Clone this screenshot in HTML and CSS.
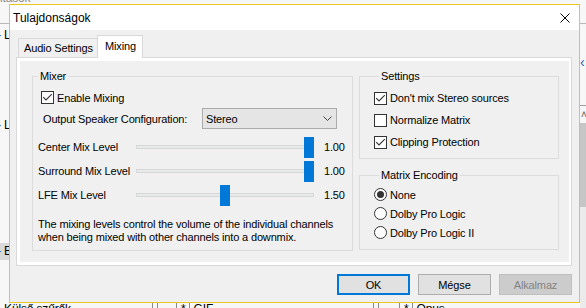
FILE: index.html
```html
<!DOCTYPE html>
<html lang="hu">
<head>
<meta charset="utf-8">
<title>Tulajdonságok</title>
<link rel="stylesheet" href="styles.css">
</head>
<body>
<div class="desktop">
  <div class="bg-title">itások</div>
  <div class="bg-line"></div>
  <div class="bg-item bg-item-1">- L</div>
  <div class="bg-item bg-item-2">- L</div>
  <div class="bg-item bg-item-3 bg-sel">- E</div>
  <div class="bg-item bg-item-4">- Külső szűrők</div>
  <div class="bg-col bg-col-a"><span class="vl"></span><span class="vl"></span><span class="gap"></span><span class="vl"></span><span class="star">*</span><span class="vl"></span><span class="cell">GIF</span></div>
  <div class="bg-col bg-col-b"><span class="vl"></span><span class="vl"></span><span class="gap gap-b"></span><span class="vl"></span><span class="star">*</span><span class="vl"></span><span class="cell">Opus</span></div>
  <div class="bg-chev">&lsaquo;</div>
  <div class="bg-rline"></div>
  <div class="bg-up">&#x2c4;</div>
  <div class="bg-thumb"></div>
  <div class="bg-track"></div>

  <div class="dialog">
    <div class="titlebar">
      <span class="title">Tulajdonságok</span>
      <svg class="close" width="10" height="10" viewBox="0 0 10 10"><path d="M0.5 0.5 L9.5 9.5 M9.5 0.5 L0.5 9.5" stroke="#000" stroke-width="1" fill="none"/></svg>
    </div>
    <div class="dialog-body">
      <div class="tabs">
        <div class="tab">Audio Settings</div>
        <div class="tab active">Mixing</div>
      </div>
      <div class="panel">
        <div class="page">
          <fieldset class="group mixer">
            <legend>Mixer</legend>
            <div class="check-row">
              <span class="cb"><svg width="11" height="11" viewBox="0 0 11 11"><polyline points="1.2,5.2 4,8 9.8,2.2" fill="none" stroke="#333" stroke-width="1.1"/></svg></span>
              <span>Enable Mixing</span>
            </div>
            <div class="speaker-row">
              <span class="speaker-label">Output Speaker Configuration:</span>
              <div class="select">
                <span>Stereo</span>
                <svg width="9" height="5" viewBox="0 0 9 5"><polyline points="0.5,0.5 4.5,4.5 8.5,0.5" fill="none" stroke="#444" stroke-width="1"/></svg>
              </div>
            </div>
            <div class="sliders">
              <div class="slider-row">
                <span class="slider-label">Center Mix Level</span>
                <div class="slider"><div class="track"></div><div class="thumb" style="left:168px"></div></div>
                <span class="slider-value">1.00</span>
              </div>
              <div class="slider-row">
                <span class="slider-label">Surround Mix Level</span>
                <div class="slider"><div class="track"></div><div class="thumb" style="left:168px"></div></div>
                <span class="slider-value">1.00</span>
              </div>
              <div class="slider-row">
                <span class="slider-label">LFE Mix Level</span>
                <div class="slider"><div class="track"></div><div class="thumb" style="left:84px"></div></div>
                <span class="slider-value">1.50</span>
              </div>
            </div>
            <p class="desc">The mixing levels control the volume of the individual channels<br>when being mixed with other channels into a downmix.</p>
          </fieldset>
          <div class="right-col">
            <fieldset class="group settings">
              <legend>Settings</legend>
              <div class="opt-row">
                <span class="cb"><svg width="11" height="11" viewBox="0 0 11 11"><polyline points="1.2,5.2 4,8 9.8,2.2" fill="none" stroke="#333" stroke-width="1.1"/></svg></span>
                <span>Don't mix Stereo sources</span>
              </div>
              <div class="opt-row">
                <span class="cb"></span>
                <span>Normalize Matrix</span>
              </div>
              <div class="opt-row">
                <span class="cb"><svg width="11" height="11" viewBox="0 0 11 11"><polyline points="1.2,5.2 4,8 9.8,2.2" fill="none" stroke="#333" stroke-width="1.1"/></svg></span>
                <span>Clipping Protection</span>
              </div>
            </fieldset>
            <fieldset class="group matrix">
              <legend>Matrix Encoding</legend>
              <div class="radio-row">
                <span class="rb on"><span class="dot"></span></span>
                <span>None</span>
              </div>
              <div class="radio-row">
                <span class="rb"></span>
                <span>Dolby Pro Logic</span>
              </div>
              <div class="radio-row">
                <span class="rb"></span>
                <span>Dolby Pro Logic II</span>
              </div>
            </fieldset>
          </div>
        </div>
      </div>
      <div class="buttons">
        <button class="btn default">OK</button>
        <button class="btn">Mégse</button>
        <button class="btn disabled">Alkalmaz</button>
      </div>
    </div>
  </div>
</div>
</body>
</html>
```
FILE: styles.css
```css
* { box-sizing: border-box; }

body {
  margin: 0;
  width: 586px;
  height: 308px;
  overflow: hidden;
  font-family: "Liberation Sans", Arial, sans-serif;
  font-size: 11px;
  letter-spacing: -0.15px;
  color: #000;
}

.desktop {
  position: relative;
  width: 586px;
  height: 308px;
  overflow: hidden;
  background: #f7f7f7;
}

/* ---- background application (behind the dialog) ---- */
.bg-title {
  position: absolute;
  left: 0;
  top: -9px;
  font-size: 12px;
  line-height: 14px;
  color: #8c8c8c;
}
.bg-line {
  position: absolute;
  left: 0;
  right: 0;
  top: 23px;
  height: 1px;
  background: #b9b9b9;
}
.bg-item {
  position: absolute;
  left: -3px;
  font-size: 12px;
  line-height: 16px;
  white-space: nowrap;
}
.bg-item-1 { top: 27px; }
.bg-item-2 { top: 117px; }
.bg-item-3 { top: 243px; width: 12px; height: 17px; }
.bg-sel { background: #d9d9d9; }
.bg-item-4 { top: 301px; left: -3px; }
.bg-col {
  position: absolute;
  top: 302px;
  height: 8px;
  display: flex;
  align-items: flex-start;
  font-size: 12px;
  line-height: 14px;
}
.bg-col-a { left: 152px; }
.bg-col-b { left: 373px; }
.bg-col .vl { width: 1px; height: 8px; background: #8a8a8a; margin-right: 4px; }
.bg-col .gap { width: 14px; }
.bg-col .gap-b { width: 16px; }
.bg-col .star { margin-right: 3px; }
.bg-chev {
  position: absolute;
  left: 580px;
  top: 55px;
  font-size: 14px;
  line-height: 14px;
  color: #1c5fb0;
}
.bg-rline {
  position: absolute;
  left: 580px;
  right: 0;
  top: 105px;
  height: 1px;
  background: #a0a0a0;
}
.bg-up {
  position: absolute;
  left: 581px;
  top: 110px;
  font-size: 10px;
  line-height: 10px;
  color: #555;
}
.bg-thumb {
  position: absolute;
  left: 580px;
  right: 0;
  top: 123px;
  height: 84px;
  background: #c6c6c6;
}
.bg-track {
  position: absolute;
  left: 580px;
  right: 0;
  top: 207px;
  bottom: 0;
  background: #ebebeb;
}

/* ---- dialog ---- */
.dialog {
  position: absolute;
  left: 9px;
  top: 4px;
  width: 571px;
  height: 299px;
  border: 1px solid #e8c81e;
  background: #f0f0f0;
  display: flex;
  flex-direction: column;
}

.titlebar {
  height: 25px;
  flex: none;
  background: #fff;
  display: flex;
  align-items: center;
  padding-left: 3px;
  padding-right: 9px;
}
.title { font-size: 12px; letter-spacing: 0; }
.close { margin-left: auto; }

.dialog-body {
  flex: 1;
  display: flex;
  flex-direction: column;
  padding: 5px 7px 0 6px;
}

.tabs {
  display: flex;
  align-items: flex-end;
  height: 23px;
  margin-left: 2px;
  margin-bottom: -1px;
  position: relative;
  z-index: 1;
}
.tab {
  height: 19px;
  margin-bottom: 1px;
  padding: 0 0 0 5px;
  border: 1px solid #d9d9d9;
  border-bottom: none;
  background: #f0f0f0;
  display: flex;
  align-items: center;
  white-space: nowrap;
  width: 80px;
  flex: none;
}
.tab.active {
  height: 23px;
  margin-bottom: 0;
  margin-left: -1px;
  width: 46px;
  background: #fff;
  padding: 0 0 3px 7px;
}

.panel {
  height: 209px;
  flex: none;
  border: 1px solid #d9d9d9;
  background: #fff;
  padding: 3px;
  display: flex;
}
.page {
  flex: 1;
  background: #f0f0f0;
  display: flex;
  align-items: flex-start;
  gap: 6px;
  padding: 9px 10px 0 12px;
}

.group {
  margin: 0;
  padding: 0;
  border: 1px solid #dcdcdc;
  min-width: 0;
}
.group legend {
  margin-left: 5px;
  padding: 0 2px;
  line-height: 13px;
}

.mixer {
  width: 321px;
  height: 181px;
}
.check-row {
  display: flex;
  align-items: center;
  gap: 3px;
  height: 13px;
  margin-top: 8px;
  padding-left: 8px;
}
.cb {
  width: 13px;
  height: 13px;
  flex: none;
  border: 1px solid #333;
  background: #fff;
  display: flex;
}
.speaker-row {
  display: flex;
  align-items: center;
  height: 21px;
  margin-top: 4px;
  padding-left: 10px;
}
.speaker-label { width: 159px; flex: none; }
.select {
  width: 135px;
  height: 21px;
  border: 1px solid #acacac;
  background: #e5e5e5;
  display: flex;
  align-items: center;
  justify-content: space-between;
  padding: 0 4px 0 3px;
}

.sliders {
  margin-top: 6px;
}
.slider-row {
  display: flex;
  align-items: center;
  height: 24px;
  padding-left: 5px;
}
.slider-label { width: 98px; flex: none; }
.slider {
  position: relative;
  width: 178px;
  height: 21px;
  display: flex;
  align-items: center;
}
.track {
  flex: 1;
  height: 4px;
  background: #e7eaea;
  border: 1px solid #d6d6d6;
}
.thumb {
  position: absolute;
  top: 0;
  width: 10px;
  height: 21px;
  background: #0078d7;
}
.slider-value { margin-left: 10px; }

.desc {
  margin: 11px 0 0;
  padding-left: 5px;
  line-height: 13px;
}

.right-col {
  width: 200px;
  display: flex;
  flex-direction: column;
  gap: 10px;
}
.settings {
  height: 89px;
  padding: 4px 0 0 14px;
}
.opt-row {
  display: flex;
  align-items: center;
  gap: 3px;
  height: 22px;
}
.matrix {
  height: 81px;
  padding: 3px 0 0 14px;
}
.radio-row {
  display: flex;
  align-items: center;
  gap: 3px;
  height: 19px;
}
.rb {
  width: 13px;
  height: 13px;
  flex: none;
  border: 1px solid #333;
  border-radius: 50%;
  background: #fff;
  display: flex;
  align-items: center;
  justify-content: center;
}
.rb .dot {
  width: 7px;
  height: 7px;
  border-radius: 50%;
  background: #333;
}

.buttons {
  display: flex;
  justify-content: flex-end;
  gap: 8px;
  margin-top: 8px;
}
.btn {
  width: 73px;
  height: 21px;
  border: 1px solid #adadad;
  background: #e1e1e1;
  font-family: inherit;
  font-size: 11px;
  letter-spacing: -0.15px;
  color: #000;
  padding: 0;
}
.btn.default { border: 2px solid #0078d7; }
.btn.disabled {
  background: #cccccc;
  border-color: #bfbfbf;
  color: #838383;
}
```
